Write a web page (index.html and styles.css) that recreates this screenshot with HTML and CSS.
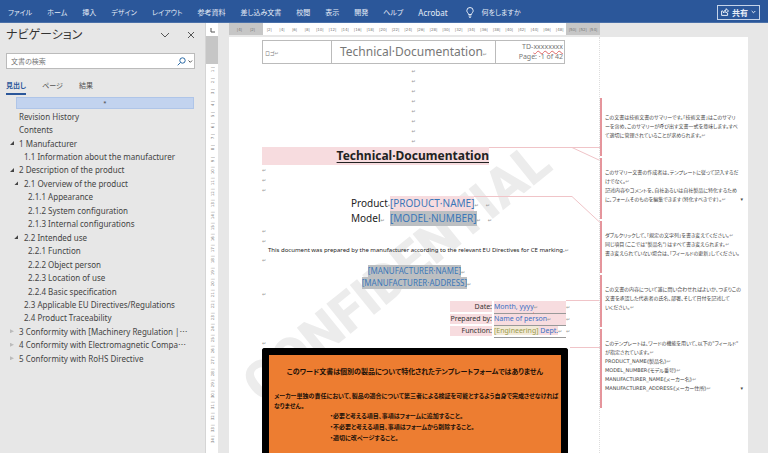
FILE: index.html
```html
<!DOCTYPE html>
<html lang="ja">
<head>
<meta charset="utf-8">
<title>Technical Documentation</title>
<link rel="stylesheet" href="styles.css">
</head>
<body>
<header class="ribbon">
  <nav class="ribbon-tabs">
    <a href="#">ファイル</a><a href="#">ホーム</a><a href="#">挿入</a><a href="#">デザイン</a><a href="#">レイアウト</a><a href="#">参考資料</a><a href="#">差し込み文書</a><a href="#">校閲</a><a href="#">表示</a><a href="#">開発</a><a href="#">ヘルプ</a><a class="latin" href="#">Acrobat</a>
  </nav>
  <button class="tell-me" type="button">
    <svg width="8" height="11" viewBox="0 0 8 11"><path d="M2.5 7.5C2.5 6 .8 5.400 .8 3.700A3.200 3.200 0 0 1 7.200 3.700C7.200 5.400 5.500 6 5.500 7.500ZM2.600 9h2.800M3.200 10.400h1.600"/></svg>
    <span>何をしますか</span>
  </button>
  <button class="share" type="button">
    <svg width="8" height="8" viewBox="0 0 8 8"><path d="M2 3H.6v4.400h6V5M2.400 5C2.400 3 3.600 2.300 5 2.300V.7L7.600 3 5 5V3.700C4 3.700 3 4 2.400 5Z"/></svg>
    <span>共有</span>
    <svg width="5" height="4" viewBox="0 0 5 4"><path d="M.7 1l1.800 1.800L4.300 1"/></svg>
  </button>
</header>
<div class="workspace">
  <aside class="nav-pane">
    <div class="nav-head">
      <h2>ナビゲーション</h2>
      <button type="button" aria-label="オプション"><svg width="10" height="8" viewBox="0 0 10 8"><path d="M1 2l4 4 4-4"/></svg></button>
      <button type="button" aria-label="閉じる"><svg width="8" height="8" viewBox="0 0 8 8"><path d="M1 1l6 6M7 1L1 7"/></svg></button>
    </div>
    <div class="search">
      <input type="text" placeholder="文書の検索" aria-label="文書の検索">
      <button type="button" aria-label="検索">
        <svg width="16" height="9" viewBox="0 0 16 9"><circle cx="5.500" cy="3.500" r="2.700"/><path d="M3.500 5.500L.7 8.300"/><path class="arrow" d="M11.500 3.500l1.800 1.800 1.800-1.800"/></svg>
      </button>
    </div>
    <div class="nav-tabs">
      <button class="active" type="button">見出し</button>
      <button type="button">ページ</button>
      <button type="button">結果</button>
    </div>
    <ul class="tree">
      <li class="selected"><a href="#">*</a></li>
      <li class="l1"><a href="#">Revision History</a></li>
      <li class="l1"><a href="#">Contents</a></li>
      <li class="l1 open"><a href="#">1 Manufacturer</a></li>
      <li class="l2"><a href="#">1.1 Information about the manufacturer</a></li>
      <li class="l1 open"><a href="#">2 Description of the product</a></li>
      <li class="l2 open"><a href="#">2.1 Overview of the product</a></li>
      <li class="l3"><a href="#">2.1.1 Appearance</a></li>
      <li class="l3"><a href="#">2.1.2 System configuration</a></li>
      <li class="l3"><a href="#">2.1.3 Internal configurations</a></li>
      <li class="l2 open"><a href="#">2.2 Intended use</a></li>
      <li class="l3"><a href="#">2.2.1 Function</a></li>
      <li class="l3"><a href="#">2.2.2 Object person</a></li>
      <li class="l3"><a href="#">2.2.3 Location of use</a></li>
      <li class="l3"><a href="#">2.2.4 Basic specification</a></li>
      <li class="l2"><a href="#">2.3 Applicable EU Directives/Regulations</a></li>
      <li class="l2"><a href="#">2.4 Product Traceability</a></li>
      <li class="l1 closed"><a href="#">3 Conformity with [Machinery Regulation |⋯</a></li>
      <li class="l1 closed"><a href="#">4 Conformity with Electromagnetic Compa⋯</a></li>
      <li class="l1 closed"><a href="#">5 Conformity with RoHS Directive</a></li>
    </ul>
  </aside>
  <div class="v-ruler">
    <div class="tab-stop"><svg width="5" height="5" viewBox="0 0 5 5"><path d="M1 0v4h4"/></svg></div>
    <div class="v-margin"></div>
    <div class="v-scale"></div>
  </div>
  <main class="canvas">
    <div class="h-ruler">
      <div class="h-dark left"></div>
      <div class="h-scale"></div>
      <div class="h-dark right"></div>
    </div>
    <div class="page">
      <div class="watermark">CONFIDENTIAL</div>
      <svg class="connectors" width="374" height="320" viewBox="0 0 374 320">
        <path d="M260 110.500h112M343 110.500l28 13M239 159.500h104l28 26M337 263.500h35M341 310.500h31"/>
      </svg>
      <article class="document">
        <table class="doc-head">
          <tr>
            <td class="logo">ロゴ<i>↵</i></td>
            <td class="name">Technical·Documentation<i>↵</i></td>
            <td class="meta">TD-<u>xxxxxxxx</u><br>Page: ·1 of 42</td>
          </tr>
        </table>
        <div class="marks center"><i>↵</i><i>↵</i><i>↵</i><i>↵</i><i>↵</i><i>↵</i><i>↵</i><i>↵</i></div>
        <h1 class="title"><span>Technical·Documentation</span></h1>
        <div class="marks spaced"><i>↵</i><i>↵</i><i>↵</i></div>
        <dl class="product">
          <dt>Product<i>↵</i></dt><dd><span class="pink">[PRODUCT·NAME]</span><i>↵</i><i class="far">↵</i></dd>
          <dt>Model<i>↵</i></dt><dd><span class="gray">[MODEL·NUMBER]</span><i>↵</i><i class="far">↵</i></dd>
        </dl>
        <div class="marks"><i>↵</i><i>↵</i></div>
        <p class="statement">This document was prepared by the manufacturer according to the relevant EU Directives for CE marking.<i>↵</i></p>
        <div class="marks"><i>↵</i></div>
        <div class="maker">
          <div><span class="gray">[MANUFACTURER·NAME]</span><i>↵</i></div>
          <div><span class="gray">[MANUFACTURER·ADDRESS]</span><i>↵</i></div>
        </div>
        <div class="marks spaced"><i>↵</i></div>
        <table class="sign">
          <tr><th>Date:</th><td>Month, <u>yyyy</u><i>↵</i></td><td class="end"><i>↵</i></td></tr>
          <tr><th>Prepared by:</th><td>Name of person<i>↵</i></td><td class="end"><i>↵</i></td></tr>
          <tr><th>Function:</th><td class="plain"><em>[Engineering]</em><b> Dept.</b><i>↵</i></td><td class="end"><i>↵</i></td></tr>
        </table>
        <div class="marks"><i>↵</i></div>
        <section class="notice">
          <h2>このワード文書は個別の製品について特化されたテンプレートフォームではありません</h2>
          <p>メーカー単独の責任において、製品の適合について第三者による検証を可能とするよう自身で完成させなければ<br>なりません。</p>
          <ul>
            <li>・必要と考える項目、事項はフォームに追加すること。</li>
            <li>・不必要と考える項目、事項はフォームから削除すること。</li>
            <li>・適切に改ページすること。</li>
          </ul>
        </section>
      </article>
      <aside class="comments">
        <p>この文書は技術文書のサマリーです。「技術文書」はこのサマリ<br>ーを含め、このサマリーが呼び出す文書一式を意味します。すべ<br>て適切に管理されていることが求められます。<i>↵</i></p>
        <p>このサマリー文書の作成者は、テンプレートに従って記入するだ<br>けでなく。<i>↵</i><br>記述内容やコメントを、自社あるいは自社製品に特化するため<br>に、フォームそのものを編集できます（特化すべきです）。<i>↵</i><span class="more">▾</span></p>
        <p>ダブルクリックして、「規定の文字列」を書き変えてください。<i>↵</i><br>同じ項目（ここでは"製品名"）はすべて書き変えられます。<i>↵</i><br>書き変えられていない場合は、「フィールドの更新」してください。</p>
        <p>この文書の内容について誰に問い合わせればよいか、つまりこの<br>文書を承認した代表者の氏名、部署、そして日付を記述して<br>いください。<i>↵</i></p>
        <p>このテンプレートは、ワードの機能を用いて、以下の"フィールド"<br>が指定されています。<i>↵</i><br>PRODUCT_NAME《製品名》<i>↵</i><br>MODEL_NUMBER《モデル番号》<i>↵</i><br>MANUFACTURER_NAME《メーカー名》<i>↵</i><br>MANUFACTURER_ADDRESS《メーカー住所》<i>↵</i><span class="more">▾</span></p>
      </aside>
    </div>
  </main>
</div>
<script src="ruler.js"></script>
</body>
</html>
```
FILE: styles.css
```css
* { box-sizing: border-box; margin: 0; padding: 0; }
body {
  height: 100vh;
  overflow: hidden;
  display: flex;
  flex-direction: column;
  background: #e7e7e7;
  color: #444;
  font-family: "Noto Sans", "Noto Sans CJK JP", sans-serif;
  font-feature-settings: "palt";
}
a { color: inherit; text-decoration: none; }
button { border: 0; background: none; color: inherit; font: inherit; font-feature-settings: inherit; }
svg { display: block; fill: none; stroke: currentColor; }
i { font: 5px "DejaVu Sans", sans-serif; color: #999; }
ul { list-style: none; }
p, h1, h2, li, td, th, dt, dd { white-space: nowrap; }

.ribbon {
  flex: none;
  height: 23px;
  padding: 2px 8px 0;
  display: flex;
  align-items: center;
  background: #2b579a;
  border-bottom: 1px solid #4a70a9;
  color: #e6edf7;
  font-size: 7px;
}
.ribbon-tabs { display: flex; align-items: center; gap: 15px; }
.ribbon-tabs .latin { font-size: 8px; }
.tell-me { display: flex; align-items: center; gap: 8px; margin-left: 18px; }
.share {
  display: flex;
  align-items: center;
  gap: 3px;
  height: 15px;
  margin-left: auto;
  padding: 0 3px;
  border: 1px solid #c5d3e8;
  font-size: 8px;
  font-weight: 700;
}

.workspace { flex: 1; min-height: 0; display: flex; }
.nav-pane { flex: none; width: 205px; padding: 3px 10px 0 6px; }
.nav-head { display: flex; align-items: center; height: 17px; margin-bottom: 10px; }
.nav-head h2 { flex: 1; font-size: 12px; font-weight: 400; color: #333; line-height: 17px; }
.nav-head button { margin-left: 17px; color: #555; }
.search { display: flex; align-items: center; height: 16px; background: #fff; border: 1px solid #bbb; }
.search input {
  flex: 1;
  min-width: 0;
  border: 0;
  outline: 0;
  padding-left: 4px;
  background: none;
  font: inherit;
  font-size: 7px;
}
.search input::placeholder { color: #777; }
.search button { color: #2b6aa5; margin-right: 1px; }
.search .arrow { stroke: #555; }
.nav-tabs { display: flex; gap: 16px; height: 20px; margin: 6px 0 1px; font-size: 7px; color: #555; }
.nav-tabs button { padding-top: 1px; border-bottom: 2px solid transparent; }
.nav-tabs .active { color: #2b579a; border-color: #2b579a; font-weight: 700; }
.tree { display: grid; grid-auto-rows: 1fr; height: 269px; font-size: 8px; }
.tree li { display: flex; align-items: center; position: relative; }
.tree .selected {
  justify-content: center;
  align-self: end;
  height: 12px;
  margin: 0 1px 0 10px;
  background: #c2d3ef;
  border: 1px solid #afc5e8;
  font-size: 6px;
}
.tree .l1 { padding-left: 13px; }
.tree .l2 { padding-left: 18px; }
.tree .l3 { padding-left: 22px; }
.open::before, .closed::before { content: ""; position: absolute; width: 4px; height: 4px; }
.open::before { background: #444; clip-path: polygon(100% 0, 100% 100%, 0 100%); }
.closed::before { background: #bbb; clip-path: polygon(0 0, 100% 50%, 0 100%); }
.l1::before { left: 4px; }
.l2::before { left: 8px; }

.v-ruler {
  flex: none;
  width: 13px;
  display: flex;
  flex-direction: column;
  background: #fff;
  border-left: 1px solid #d5d5d5;
  overflow: hidden;
}
.tab-stop { height: 13px; padding: 5px 0 0 4px; color: #555; flex: none; }
.v-margin { flex: none; height: 28px; background: #c6c6c6; }
.v-scale, .h-ruler { font: 4px "DejaVu Sans", sans-serif; color: #777; }
.v-scale { display: grid; grid-auto-rows: 1fr; flex: none; height: 381px; }
.v-scale span {
  writing-mode: vertical-rl;
  rotate: 180deg;
  display: flex;
  justify-content: center;
  align-items: center;
}

.canvas { flex: 1; min-width: 0; padding: 0 20px 0 11px; display: flex; flex-direction: column; }
.h-ruler { flex: none; display: flex; width: 371px; height: 12px; margin-bottom: 2px; }
.h-dark { display: flex; align-items: center; justify-content: space-evenly; width: 34px; background: #c6c6c6; }
.h-scale { flex: 1; display: grid; grid-auto-flow: column; grid-auto-columns: 1fr; background: #fff; }
.h-scale span { display: flex; align-items: center; justify-content: center; }

.page { flex: 1; min-height: 0; position: relative; display: flex; background: #fff; }
.watermark {
  position: absolute;
  left: 168px;
  top: 236px;
  translate: -50% -50%;
  rotate: -39deg;
  color: #ececec;
  font: 900 54px/1 Roboto, "Liberation Sans", sans-serif;
}
.connectors { position: absolute; left: 0; top: 0; stroke: #f0c4c8; }
.document {
  flex: none;
  width: 371px;
  position: relative;
  padding: 3px 34px 0 33px;
  display: flex;
  flex-direction: column;
  border-right: 1px dotted #ddd;
}
.doc-head {
  flex: none;
  width: 100%;
  height: 24px;
  border-collapse: collapse;
  table-layout: fixed;
  color: #777;
}
.doc-head td { border: 1px solid #bbb; vertical-align: middle; }
.doc-head .logo { width: 23%; font-size: 5px; padding-left: 2px; }
.doc-head .name { text-align: center; font-size: 12px; line-height: 14px; }
.doc-head .meta { width: 23%; text-align: right; font-size: 7px; line-height: 10px; padding-right: 1px; }
u { text-decoration: underline wavy #d66 1px; }
.marks { flex: none; display: flex; flex-direction: column; }
.marks i { height: 10px; line-height: 10px; }
.marks.center { align-items: center; padding: 2px 0 1px; }
.marks.spaced { padding-bottom: 1px; }
.title {
  flex: none;
  width: 227px;
  height: 18px;
  background: #f7dcdf;
  color: #222;
  font-size: 12px;
  line-height: 18px;
  text-align: right;
}
.title span { text-decoration: underline 1px; text-underline-offset: 2px; }
.product {
  flex: none;
  display: grid;
  grid-template-columns: 39px 1fr;
  grid-auto-rows: 15px;
  padding-left: 89px;
  font-size: 10px;
  line-height: 15px;
  color: #222;
}
.product .far { margin-left: 7px; }
.product span, .maker span { display: inline-block; color: #3b77b8; }
.pink { background: #f7dcdf; }
.gray { background: #bcbfc2; }
.statement { flex: none; padding-left: 6px; font-size: 6px; line-height: 9px; color: #222; }
.maker { flex: none; padding-left: 6px; text-align: center; font-size: 8px; line-height: 12px; }
.sign { flex: none; align-self: flex-end; margin: 1px -7px 0 0; border-collapse: collapse; font-size: 7px; line-height: 10px; }
.sign th { background: #f7dcdf; color: #333; font-weight: 400; text-align: right; border-bottom: 2px solid #fff; width: 40px; }
.sign td { width: 73px; background: #f7dcdf; color: #3b70c4; border-bottom: 1px solid #999; }
.sign th, .sign td { height: 12px; }
.sign td:nth-child(2) { border-left: 2px solid #fff; }
.sign .plain { background: none; }
.sign em { color: #9a9a4c; font-style: normal; background: #f3ead8; }
.sign b { font-weight: 400; background: #f7dcdf; }
.sign .end { width: 6px; background: none; border: 0; }
.notice {
  flex: 1;
  min-height: 130px;
  margin-right: -3px;
  border: 7px solid #000;
  border-bottom: 0;
  border-radius: 3px 3px 0 0;
  background: #ed7d31;
  color: #201008;
  padding: 11px 5px 0;
  font-size: 6px;
  font-weight: 700;
  line-height: 10px;
}
.notice h2 { font-size: 7px; line-height: 12px; text-align: center; margin-bottom: 13px; }
.notice li { line-height: 11px; padding-left: 56px; }

.comments {
  flex: 1;
  padding-top: 61px;
  font-family: "DejaVu Sans", "Noto Sans CJK JP", sans-serif;
  font-size: 5px;
  line-height: 9px;
  color: #444;
}
.comments p { position: relative; border-left: 2px solid #e5959c; padding: 10px 0 15px 3px; margin-bottom: 2px; }
.comments p:nth-child(1) { padding: 15px 0 16px 3px; }
.more { position: absolute; right: 5px; }
```
FILE: ruler.js
```js
function fill(selector, values, format) {
  const scale = document.querySelector(selector);
  for (const n of values) {
    const mark = document.createElement('span');
    mark.textContent = format(n);
    scale.append(mark);
  }
}
const bars = n => `|${n}|`;
fill('.h-dark.left', [4, 2], bars);
fill('.h-scale', Array.from({ length: 24 }, (_, i) => 2 * i + 2), bars);
fill('.h-dark.right', [50, 52, 54], bars);
fill('.v-scale', Array.from({ length: 34 }, (_, i) => i + 1), n => `${n} |`);
```
